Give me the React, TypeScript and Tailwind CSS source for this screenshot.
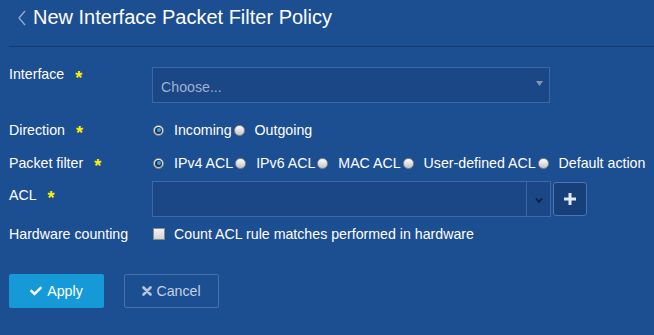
import React from 'react';
import { FaCheck } from 'react-icons/fa';

const Star = () => (
  <span className="ml-[11px] inline-block translate-y-[4px] text-[18px] leading-[14px] font-bold text-[#fff200]">*</span>
);

const Radio = ({ checked }: { checked?: boolean }) => (
  <span className="inline-flex h-[11px] w-[11px] shrink-0 items-center justify-center rounded-full border border-[#8d8d8d] bg-gradient-to-b from-[#ffffff] to-[#c4c4c4]">
    {checked && (
      <span className="flex h-[7px] w-[7px] items-center justify-center rounded-full bg-[#163852]">
        <span className="h-[4px] w-[4px] rounded-full bg-[#3aa0e6]" />
      </span>
    )}
  </span>
);

const Option = ({ label, checked }: { label: string; checked?: boolean }) => (
  <span className="flex items-center">
    <Radio checked={checked} />
    <span className="ml-[10px] mr-[2px]">{label}</span>
  </span>
);

const Label = ({ text, required, className = '' }: { text: string; required?: boolean; className?: string }) => (
  <div className={`w-[143px] shrink-0 flex items-start ${className}`}>
    <span>{text}</span>
    {required && <Star />}
  </div>
);

function App() {
  return (
    <div
      className="w-[654px] h-[335px] overflow-hidden bg-[#1c4e92] text-white text-[14.2px] leading-[16px]"
      style={{ fontFamily: '"Liberation Sans", Arial, sans-serif' }}
    >
      {/* Header */}
      <div className="ml-[9px] h-[47px] border-b border-[#163a6c] pt-[5px] pl-[8px] flex items-start">
        <svg width="10" height="16" viewBox="0 0 10 16" className="mt-[5px] mr-[6px]">
          <polyline points="8,1 2,8 8,15" fill="none" stroke="#8fa9d2" strokeWidth="1.4" />
        </svg>
        <h1 className="text-[20px] leading-[24px]">New Interface Packet Filter Policy</h1>
      </div>

      <div className="pl-[9px]">
        {/* Interface */}
        <div className="mt-[20px] flex items-start">
          <Label text="Interface" required className="leading-[14px]" />
          <div className="w-[398px] h-[36px] border border-[#3b68a6] bg-[#1b4787] flex items-center justify-between pl-[8px] pr-[6px] pt-[3px]">
            <span className="text-[#9fb1cd]">Choose...</span>
            <svg width="7" height="5" viewBox="0 0 7 5" className="-mt-[6px]">
              <polygon points="0,0 7,0 3.5,5" fill="#8796b0" />
            </svg>
          </div>
        </div>

        {/* Direction */}
        <div className="mt-[19px] flex items-center">
          <Label text="Direction" required />
          <div className="flex items-center pl-[1px]">
            <Option label="Incoming" checked />
            <Option label="Outgoing" />
          </div>
        </div>

        {/* Packet filter */}
        <div className="mt-[17px] flex items-center">
          <Label text="Packet filter" required />
          <div className="flex items-center pl-[1px] whitespace-nowrap">
            <Option label="IPv4 ACL" checked />
            <Option label="IPv6 ACL" />
            <Option label="MAC ACL" />
            <Option label="User-defined ACL" />
            <Option label="Default action" />
          </div>
        </div>

        {/* ACL */}
        <div className="mt-[10px] flex items-start">
          <Label text="ACL" required className="mt-[6px]" />
          <div className="flex items-start gap-[2px]">
            <div className="w-[399px] h-[36px] border border-[#3b68a6] bg-[#1b4787] flex">
              <div className="flex-1" />
              <div className="w-[24px] border-l border-[#3b68a6] flex items-center justify-center pt-[2px]">
                <svg width="8" height="5" viewBox="0 0 8 5">
                  <polyline points="1,0.5 4,4 7,0.5" fill="none" stroke="#0b1a33" strokeWidth="1.5" />
                </svg>
              </div>
            </div>
            <button className="mt-[1px] w-[34px] h-[34px] rounded-[3px] border border-[#4d74ad] bg-[#173f7a] flex items-center justify-center">
              <svg width="12" height="12" viewBox="0 0 12 12">
                <path d="M6 0v12M0 6h12" stroke="#e2e8f6" strokeWidth="3" />
              </svg>
            </button>
          </div>
        </div>

        {/* Hardware counting */}
        <div className="mt-[9px] flex items-center">
          <Label text="Hardware counting" />
          <div className="flex items-center">
            <span className="ml-[1px] h-[12px] w-[12px] border border-[#8a8a8a] bg-gradient-to-b from-[#f4f4f4] to-[#d4d4d4]" />
            <span className="ml-[9px]">Count ACL rule matches performed in hardware</span>
          </div>
        </div>

        {/* Buttons */}
        <div className="mt-[32px] flex gap-[20px]">
          <button className="w-[95px] h-[34px] rounded-[2px] bg-[#169ad7] flex items-center justify-center gap-[5px] text-white">
            <FaCheck className="w-[12px] h-[12px]" />
            <span>Apply</span>
          </button>
          <button className="w-[95px] h-[34px] rounded-[2px] border border-[#4a6fab] flex items-center justify-center gap-[4px] text-[#c5d0e3]">
            <svg width="10" height="10" viewBox="0 0 10 10">
              <path d="M1.5 1.5l7 7M8.5 1.5l-7 7" stroke="#b9c5da" strokeWidth="2.6" strokeLinecap="round" />
            </svg>
            <span>Cancel</span>
          </button>
        </div>
      </div>
    </div>
  );
}

export default App;
